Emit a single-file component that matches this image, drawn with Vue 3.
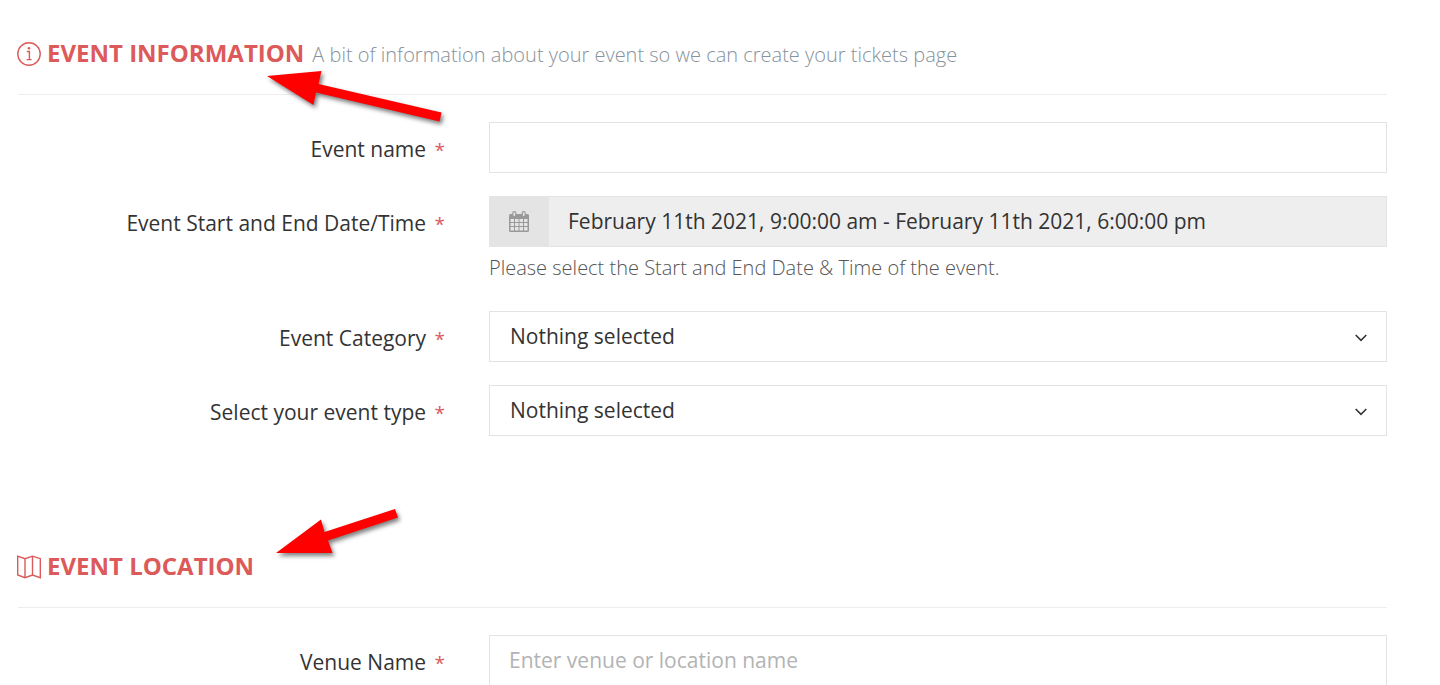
<script setup>
import { ref } from 'vue'

const eventName = ref('')
const dates = ref('February 11th 2021, 9:00:00 am - February 11th 2021, 6:00:00 pm')
const venue = ref('')
const selects = ref([
  { id: 'event-category', label: 'Event Category', value: '' },
  { id: 'event-type', label: 'Select your event type', value: '' },
])
</script>

<template>
  <main class="page">
    <section class="section">
      <header class="section-head">
        <svg class="head-icon" viewBox="0 0 24 24" aria-hidden="true">
          <circle cx="12" cy="12" r="11.2" />
          <path d="M9.8 9.5h2.6v7.5M9.6 17.6h5" />
          <circle class="solid" cx="12" cy="6.2" r="1.3" />
        </svg>
        <h2>Event information</h2>
        <small>A bit of information about your event so we can create your tickets page</small>
        <svg class="arrow arrow-info" viewBox="0 0 190 64" aria-hidden="true">
          <path d="M8 9 62.500 4 59.500 17 182.500 45.500 180.500 54.500 57 25.500 54.500 38Z" />
        </svg>
      </header>

      <div class="row">
        <label for="event-name">Event name <span class="req">*</span></label>
        <div class="field">
          <input id="event-name" v-model="eventName" class="control" type="text" />
        </div>
      </div>

      <div class="row">
        <label for="event-dates">Event Start and End Date/Time <span class="req">*</span></label>
        <div class="field">
          <div class="input-group">
            <span class="addon">
              <svg viewBox="0 0 20 21" aria-hidden="true">
                <path
                  fill-rule="evenodd"
                  d="M0 4.500Q0 3 1.500 3H18.500Q20 3 20 4.500V19.500Q20 21 18.500 21H1.500Q0 21 0 19.500ZM1.500 8V11H5V8ZM6 8V11H9.500V8ZM10.500 8V11H14V8ZM15 8V11H18.500V8ZM1.500 12V15H5V12ZM6 12V15H9.500V12ZM10.500 12V15H14V12ZM15 12V15H18.500V12ZM1.500 16V19.500H5V16ZM6 16V19.500H9.500V16ZM10.500 16V19.500H14V16ZM15 16V19.500H18.500V16Z"
                />
                <rect class="ring" x="3.800" y="0.700" width="3" height="5" rx="1.400" />
                <rect class="ring" x="13.200" y="0.700" width="3" height="5" rx="1.400" />
              </svg>
            </span>
            <input id="event-dates" class="control" type="text" :value="dates" readonly aria-describedby="dates-help" />
          </div>
          <p id="dates-help" class="help">Please select the Start and End Date &amp; Time of the event.</p>
        </div>
      </div>

      <div v-for="item in selects" :key="item.id" class="row">
        <label :for="item.id">{{ item.label }} <span class="req">*</span></label>
        <div class="field">
          <select :id="item.id" v-model="item.value" class="control">
            <option value="">Nothing selected</option>
          </select>
          <svg class="chevron" viewBox="0 0 12 8" aria-hidden="true">
            <path d="M0.700 1 6 6.300 11.300 1" />
          </svg>
        </div>
      </div>
    </section>

    <section class="section">
      <header class="section-head">
        <svg class="head-icon" viewBox="0 0 24 24" aria-hidden="true">
          <path d="M0.700 1.200 8 3.700 15.500 1.200 23.300 3.700V22.700L15.500 20 8 22.700 0.700 20ZM8 3.700V22.700M15.500 1.200V20" />
        </svg>
        <h2>Event location</h2>
        <svg class="arrow arrow-location" viewBox="0 0 132 56" aria-hidden="true">
          <path d="M6 49 51 15.500 54.500 28 125 5 128 13.500 58 36.500 62.500 49Z" />
        </svg>
      </header>

      <div class="row">
        <label for="venue-name">Venue Name <span class="req">*</span></label>
        <div class="field">
          <input id="venue-name" v-model="venue" class="control" type="text" placeholder="Enter venue or location name" />
        </div>
      </div>
    </section>
  </main>
</template>

<style>
html {
  scrollbar-width: none;
}
body {
  background: #fff;
}
</style>

<style scoped>
.page {
  box-sizing: border-box;
  padding: 32px 53px 0 18px;
  color: #333;
  font: 400 21px/30px 'Open Sans', sans-serif;
}
.section {
  margin-bottom: 109px;
}
.section-head {
  position: relative;
  display: flex;
  align-items: center;
  height: 44px;
  padding-bottom: 18px;
  margin-bottom: 27px;
  border-bottom: 1px solid #eee;
}
.head-icon {
  flex: none;
  width: 24px;
  height: 24px;
  margin: 0 6px 0 -1px;
  fill: none;
  stroke: #dc5a5a;
  stroke-width: 1.4;
}
.head-icon .solid {
  fill: #dc5a5a;
  stroke: none;
}
h2 {
  margin: 0;
  padding-bottom: 2px;
  color: #dc5a5a;
  font-size: 24px;
  font-weight: 700;
  text-transform: uppercase;
}
small {
  margin-left: 8px;
  padding-top: 2px;
  color: #87929c;
  font-size: 20px;
  font-weight: 300;
}
.arrow {
  position: absolute;
  fill: #f00;
  filter: drop-shadow(2px 3px 2px rgba(0, 0, 0, 0.5));
}
.arrow-info {
  left: 241px;
  top: 35px;
  width: 190px;
  height: 64px;
}
.arrow-location {
  left: 252px;
  top: -41px;
  width: 132px;
  height: 56px;
}
.row {
  display: grid;
  grid-template-columns: 1fr 2fr;
  margin: 0 -22px 23px;
}
.row > label {
  padding: 12px 22px 0;
  text-align: right;
}
.req {
  margin-left: 3px;
  color: #dc5a5a;
  font-size: 19px;
}
.field {
  position: relative;
  padding: 0 22px;
}
.control {
  box-sizing: border-box;
  display: block;
  width: 100%;
  height: 51px;
  padding: 0 19px 1px;
  border: 1px solid #e3e3e3;
  border-radius: 0;
  background: #fff;
  color: #333;
  font: inherit;
  appearance: none;
}
.control::placeholder {
  color: #b3b3b3;
  opacity: 1;
}
select.control {
  padding: 0 20px 1px;
}
.input-group {
  display: flex;
}
.input-group .control {
  flex: 1;
  width: auto;
  border-left: 0;
  background: #eee;
}
.addon {
  flex: none;
  display: grid;
  place-items: center;
  width: 60px;
  background: #e4e4e4;
}
.addon svg {
  width: 20px;
  height: 21px;
  fill: #999;
}
.addon .ring {
  fill: #e4e4e4;
  stroke: #999;
  stroke-width: 1.2;
}
.help {
  margin: 6px 0 5px;
  color: #555;
  font-size: 20px;
  font-weight: 300;
}
.chevron {
  position: absolute;
  top: 23px;
  right: 42px;
  width: 12px;
  height: 8px;
  fill: none;
  stroke: #333;
  stroke-width: 1.6;
  pointer-events: none;
}
</style>
